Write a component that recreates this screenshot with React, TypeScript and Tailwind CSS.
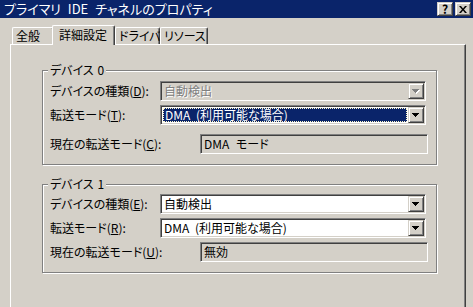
import type { ReactNode } from 'react';

const FONT = '"Noto Sans CJK JP", "Liberation Sans", sans-serif';

function Arrow({ disabled }: { disabled?: boolean }) {
  const path = 'M0 0h7v1H0z M1 1h5v1H1z M2 2h3v1H2z M3 3h1v1H3z';
  return (
    <svg width="8" height="5" viewBox="0 0 8 5" className="block">
      {disabled && <path d={path} transform="translate(1 1)" fill="#ffffff" />}
      <path d={path} fill={disabled ? '#808080' : '#000000'} />
    </svg>
  );
}

function Combo({ text, disabled, focused }: { text: string; disabled?: boolean; focused?: boolean }) {
  return (
    <div
      className={`flex h-[20px] w-[266px] border border-t-[#808080] border-l-[#808080] border-b-white border-r-white p-[1px] shadow-[inset_1px_1px_0_#404040,inset_-1px_-1px_0_#d4d0c8] ${
        disabled ? 'bg-[#d4d0c8]' : 'bg-white'
      }`}
    >
      <div className="flex min-w-0 flex-1 items-center whitespace-nowrap [word-spacing:3px]">
        {focused ? (
          <div className="m-[1px] flex h-[14px] flex-1 items-center border border-dotted border-[#fff8c8] bg-[#0a246a] pl-[1px] text-white">
            {text}
          </div>
        ) : (
          <span
            className={`pl-[2px] ${disabled ? 'text-[#808080] [text-shadow:1px_1px_0_#ffffff]' : 'text-black'}`}
          >
            {text}
          </span>
        )}
      </div>
      <div className="flex h-full w-[16px] items-center justify-center border border-t-[#d4d0c8] border-l-[#d4d0c8] border-b-[#404040] border-r-[#404040] bg-[#d4d0c8] shadow-[inset_1px_1px_0_#ffffff,inset_-1px_-1px_0_#808080]">
        <Arrow disabled={disabled} />
      </div>
    </div>
  );
}

function Static({ text }: { text: string }) {
  return (
    <div className="flex h-[20px] w-[228px] items-center whitespace-nowrap border border-t-[#808080] border-l-[#808080] border-b-white border-r-white bg-[#d4d0c8] pl-[3px] [word-spacing:4px] shadow-[inset_1px_1px_0_#404040]">
      {text}
    </div>
  );
}

function Label({ children, w }: { children: ReactNode; w: string }) {
  return <div className={`${w} shrink-0 whitespace-nowrap text-black`}>{children}</div>;
}

function Tab({ label, selected, w }: { label: string; selected?: boolean; w: string }) {
  return (
    <div
      className={`${w} flex shrink-0 items-center whitespace-nowrap rounded-t-[2px] border-l border-t border-r border-l-white border-t-white border-r-[#404040] bg-[#d4d0c8] shadow-[inset_-1px_0_0_#808080] ${
        selected ? 'relative z-10 -mb-px -ml-[2px] h-[20px] pb-[2px] pl-[6px]' : 'h-[17px] pl-[3px]'
      }`}
    >
      {label}
    </div>
  );
}

function Group({ title, rows }: { title: ReactNode; rows: ReactNode }) {
  return (
    <fieldset className="w-[393px] border border-[#808080] pb-[10px] pl-[7px] pr-[8px] shadow-[inset_1px_1px_0_#ffffff,1px_1px_0_#ffffff]">
      <legend className="-ml-[2px] whitespace-nowrap bg-[#d4d0c8] px-[2px] leading-[14px]">{title}</legend>
      {rows}
    </fieldset>
  );
}

export default function App() {
  return (
    <div
      className="flex h-[307px] w-[473px] flex-col overflow-hidden bg-[#d4d0c8] text-[12px] leading-[16px] text-black [font-feature-settings:'palt']"
      style={{ fontFamily: FONT }}
    >
      {/* title bar */}
      <div className="flex h-[18px] shrink-0 items-center bg-[#0a246a] pl-[4px] pr-[2px] text-white">
        <span className="flex-1 whitespace-nowrap text-[13px] leading-[18px] [word-spacing:4px]">プライマリ IDE チャネルのプロパティ</span>
        <div className="flex gap-[2px]">
          <div className="flex h-[14px] w-[16px] items-center justify-center border border-t-[#d4d0c8] border-l-[#d4d0c8] border-b-[#404040] border-r-[#404040] bg-[#d4d0c8] text-[12px] font-bold leading-none text-black shadow-[inset_1px_1px_0_#ffffff,inset_-1px_-1px_0_#808080]">
            ?
          </div>
          <div className="flex h-[14px] w-[16px] items-center justify-center border border-t-[#d4d0c8] border-l-[#d4d0c8] border-b-[#404040] border-r-[#404040] bg-[#d4d0c8] shadow-[inset_1px_1px_0_#ffffff,inset_-1px_-1px_0_#808080]">
            <svg width="8" height="7" viewBox="0 0 8 7">
              <path d="M0 0h2l2 2.5L6 0h2L5 3.5 8 7H6L4 4.5 2 7H0l3-3.5z" fill="#000000" />
            </svg>
          </div>
        </div>
      </div>

      {/* tabs */}
      <div className="mt-[7px] flex shrink-0 items-end pl-[12px]">
        <Tab label="全般" w="w-[42px]" />
        <Tab label="詳細設定" w="w-[63px]" selected />
        <Tab label="ドライバ" w="w-[45px]" />
        <Tab label="リソース" w="w-[48px]" />
      </div>

      {/* tab panel */}
      <div className="ml-[10px] w-[456px] flex-1 border-l border-t border-r border-l-white border-t-white border-r-[#404040] pl-[31px] pt-[18px] shadow-[inset_-1px_0_0_#808080]">
        <Group
          title={
            <>
              デバイス<span className="ml-[4px]">0</span>
            </>
          }
          rows={
            <div className="flex flex-col pt-[4px]">
              <div className="flex items-center">
                <Label w="w-[110px]">
                  デバイスの種類(<u>D</u>):
                </Label>
                <Combo text="自動検出" disabled />
              </div>
              <div className="mt-[4px] flex items-center">
                <Label w="w-[110px]">
                  転送モード(<u>T</u>):
                </Label>
                <Combo text="DMA (利用可能な場合)" focused />
              </div>
              <div className="mt-[9px] flex items-center">
                <Label w="w-[150px]">
                  現在の転送モード(<u>C</u>):
                </Label>
                <Static text="DMA モード" />
              </div>
            </div>
          }
        />
        <div className="h-[12px]" />
        <Group
          title={
            <>
              デバイス<span className="ml-[4px]">1</span>
            </>
          }
          rows={
            <div className="flex flex-col pt-[3px]">
              <div className="flex items-center">
                <Label w="w-[110px]">
                  デバイスの種類(<u>E</u>):
                </Label>
                <Combo text="自動検出" />
              </div>
              <div className="mt-[4px] flex items-center">
                <Label w="w-[110px]">
                  転送モード(<u>R</u>):
                </Label>
                <Combo text="DMA (利用可能な場合)" />
              </div>
              <div className="mt-[4px] flex items-center">
                <Label w="w-[150px]">
                  現在の転送モード(<u>U</u>):
                </Label>
                <Static text="無効" />
              </div>
            </div>
          }
        />
      </div>
    </div>
  );
}
